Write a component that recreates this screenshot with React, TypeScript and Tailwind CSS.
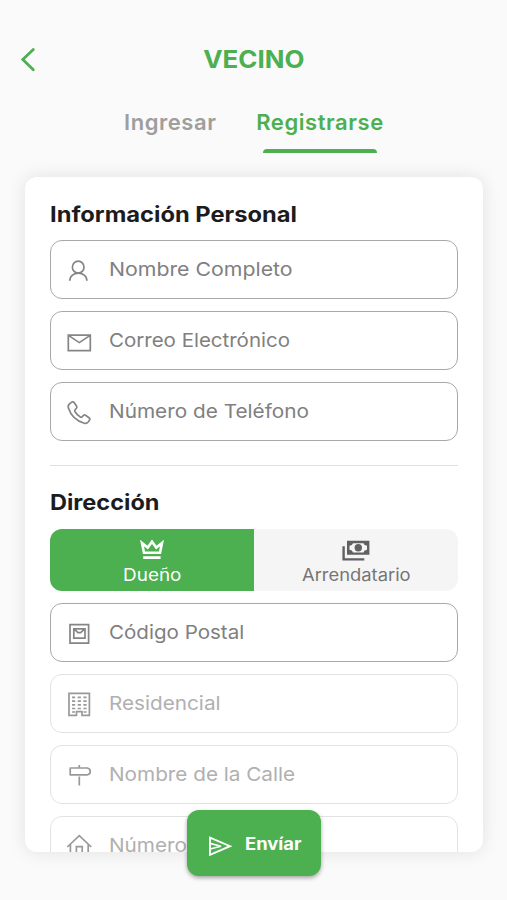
import type { ReactNode } from "react";

type FieldProps = {
  label: string;
  labelClass: string;
  icon: ReactNode;
  disabled?: boolean;
};

const Icon = ({ children }: { children: ReactNode }) => (
  <svg
    viewBox="0 0 28 28"
    className="h-7 w-7 shrink-0"
    fill="none"
    stroke="currentColor"
    strokeWidth="1.7"
  >
    {children}
  </svg>
);

const UserIcon = () => (
  <Icon>
    <ellipse cx="13.2" cy="11.2" rx="5.8" ry="6" />
    <path d="M4.8 24.8C4.8 14.6 21.9 14.6 21.9 24.8" />
  </Icon>
);

const MailIcon = () => (
  <Icon>
    <path d="M3.3 8.2H25.3V23.6H3.3ZM3.8 8.6L14.3 15.6L24.8 8.6" />
  </Icon>
);

const PhoneIcon = () => (
  <Icon>
    <path d="M4.8 5.7L6.8 4.1Q8.2 3.3 9.2 4.6L11.6 8.2Q12.3 9.5 11.3 10.5L10.1 11.7Q9.4 12.5 9.9 13.5Q12 17.2 15.4 19.1Q16.3 19.6 17.1 18.8L18.5 17.4Q19.4 16.6 20.5 17.3L24.3 20Q25.4 20.9 24.6 22.1L23.2 24Q21.6 25.9 19.2 25.2Q7 21.5 3.4 10Q2.6 7.4 4.8 5.7Z" />
  </Icon>
);

const StampIcon = () => (
  <Icon>
    <path d="M5 5.6H23.6V24.2H5ZM8.8 9.8H20V19.2H8.8ZM9.2 10.2L13 13.6H15.6L19.6 10.2" />
  </Icon>
);

const BuildingIcon = () => (
  <Icon>
    <path d="M4 3.4H24.4V25.4H17V21.6H11.5V25.4H4Z" />
    <path
      d="M7 7.4H21.6M7 11.1H21.6M7 14.8H21.6M7 18.5H21.6M7 22H10M18.5 22H21.6"
      strokeDasharray="3.2 2.5"
    />
  </Icon>
);

const SignIcon = () => (
  <Icon>
    <path d="M5.2 7H22.5Q25.3 7.8 25.3 10.4Q25.3 13 22.5 13.8H5.2ZM14.3 4V7M14.3 15.5V24.4" strokeLinejoin="round" />
  </Icon>
);

const HomeIcon = () => (
  <Icon>
    <path d="M2.3 15L14.3 3.6L26.3 15M5.4 12.5V26H23.2V12.5M11.4 26V14.6H17.2V26" />
  </Icon>
);

const CrownIcon = () => (
  <svg viewBox="0 0 24 22" className="h-[22px] w-6" fill="none" stroke="currentColor">
    <path d="M2 4L4 13.8H20L22 4L16.3 8.6L12 2.8L7.7 8.6Z" strokeWidth="2.6" />
    <path d="M3.2 18.7H20.6" strokeWidth="2.8" />
  </svg>
);

const MoneyIcon = () => (
  <svg viewBox="0 0 28 22" className="h-[22px] w-7" fill="none" stroke="currentColor">
    <path d="M1.6 7.3V20.4H22.3" strokeWidth="2.4" />
    <path d="M5 1.8H27.4V15.8H5Z" fill="currentColor" stroke="none" />
    <path
      d="M11 4.2H21.5Q22 6.4 25 6.8V10.8Q22 11.2 21.5 13.4H11Q10.5 11.2 7.5 10.8V6.8Q10.5 6.4 11 4.2Z"
      fill="#f5f5f5"
      stroke="none"
    />
    <circle cx="16.3" cy="8.8" r="3.7" fill="currentColor" stroke="none" />
  </svg>
);

const SendIcon = () => (
  <svg viewBox="0 0 26 22" className="h-[22px] w-[26px] shrink-0" fill="none" stroke="currentColor">
    <path d="M3 2.6L23 11.2L3 19.8Z" strokeWidth="1.9" />
    <path d="M3 8.4L14 11.2L3 14" strokeWidth="1.6" />
  </svg>
);

const Field = ({ label, labelClass, icon, disabled }: FieldProps) => (
  <div
    className={`flex h-[59px] shrink-0 items-center gap-4 rounded-xl border-[1.5px] pl-3.5 pt-px ${
      disabled ? "border-[#e2e2e2] text-[#999]" : "border-[#a8a8a8] text-[#858585]"
    }`}
  >
    {icon}
    <span
      className={`origin-left whitespace-nowrap text-[19px] leading-6 ${labelClass} ${
        disabled ? "text-[#b0b0b0]" : "text-[#808080]"
      }`}
    >
      {label}
    </span>
  </div>
);

export default function App() {
  return (
    <div className="flex h-[900px] w-[507px] flex-col overflow-hidden bg-[#fafafa] font-['Inter',sans-serif]">
      <header className="grid h-[86px] shrink-0 grid-cols-[1fr_auto_1fr] items-end px-5 pb-3">
        <svg
          viewBox="0 0 16 28"
          className="h-7 w-4"
          fill="none"
          stroke="#4caf50"
          strokeWidth="2.8"
          strokeLinecap="round"
        >
          <path d="M13.3 3.5L2.8 13.6L13.3 23.8" />
        </svg>
        <h1 className="-mb-px scale-x-[1.08] text-2xl font-bold leading-[30px] text-[#4caf50]">
          VECINO
        </h1>
      </header>

      <nav className="flex h-[67px] shrink-0 gap-10 pl-[124px] text-[22px] font-semibold leading-[30px] tracking-[0.55px]">
        <span className="w-[92px] whitespace-nowrap pt-[21px] text-[#9e9e9e]">Ingresar</span>
        <span className="flex w-[128px] flex-col items-center justify-between whitespace-nowrap pt-[21px] text-[#4caf50]">
          Registrarse
          <i className="h-1 w-[114px] rounded-t-sm bg-[#4caf50]" />
        </span>
      </nav>

      <main className="ml-[25px] mr-6 mt-6 flex h-[675px] shrink-0 flex-col rounded-xl bg-white shadow-[0_0_18px_rgba(0,0,0,0.1)]">
        <div className="flex min-h-0 flex-1 flex-col overflow-hidden rounded-xl px-[25px] pt-6">
          <h2 className="mb-[11px] h-7 shrink-0 origin-left scale-x-[1.128] whitespace-nowrap text-[21px] font-bold leading-7 text-[#1c1c1e]">
            Información Personal
          </h2>
          <div className="flex shrink-0 flex-col gap-3">
            <Field label="Nombre Completo" labelClass="scale-x-[1.12]" icon={<UserIcon />} />
            <Field label="Correo Electrónico" labelClass="scale-x-[1.078]" icon={<MailIcon />} />
            <Field label="Número de Teléfono" labelClass="scale-x-[1.093]" icon={<PhoneIcon />} />
          </div>
          <hr className="mt-6 shrink-0 border-[#e0e0e0]" />
          <h2 className="mb-3 mt-[23px] h-7 shrink-0 origin-left scale-x-[1.12] text-[21px] font-bold leading-7 text-[#1c1c1e]">
            Dirección
          </h2>
          <div className="grid h-[62px] shrink-0 grid-cols-2 overflow-hidden rounded-xl text-[17px] leading-6">
            <div className="flex flex-col items-center bg-[#4caf50] pt-2.5 text-white">
              <CrownIcon />
              <span className="mt-0.5 scale-x-[1.11]">Dueño</span>
            </div>
            <div className="flex flex-col items-center bg-[#f5f5f5] pt-2.5 text-[#616161]">
              <MoneyIcon />
              <span className="mt-0.5 scale-x-[1.08] text-[#757575]">Arrendatario</span>
            </div>
          </div>
          <div className="mt-3 flex shrink-0 flex-col gap-3">
            <Field label="Código Postal" labelClass="scale-x-[1.082]" icon={<StampIcon />} />
            <Field label="Residencial" labelClass="scale-x-[1.09]" icon={<BuildingIcon />} disabled />
            <Field label="Nombre de la Calle" labelClass="scale-x-[1.09]" icon={<SignIcon />} disabled />
            <Field label="Número" labelClass="scale-x-[1.09]" icon={<HomeIcon />} disabled />
          </div>
        </div>
      </main>

      <button className="absolute left-[187px] top-[810px] flex h-[66px] w-[134px] items-center rounded-xl bg-[#4caf50] pl-5 pt-0.5 text-white shadow-[0_2px_4px_rgba(0,0,0,0.35)]">
        <span className="pt-1">
          <SendIcon />
        </span>
        <span className="ml-3 origin-left scale-x-[1.08] text-[17px] font-bold leading-6">Envíar</span>
      </button>
    </div>
  );
}
